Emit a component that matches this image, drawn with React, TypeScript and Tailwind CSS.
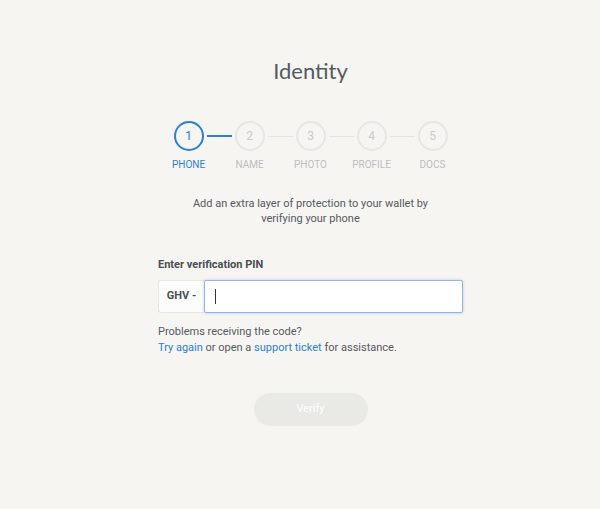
import React from "react";

const steps = ["PHONE", "NAME", "PHOTO", "PROFILE", "DOCS"];

export default function App() {
  return (
    <div className="w-[600px] h-[509px] bg-[#f6f5f2] flex justify-center pl-[21px]" style={{ fontFamily: "Roboto, 'Liberation Sans', sans-serif" }}>
      <div className="w-[305px] flex flex-col items-center">
        <h1 className="mt-[57px] text-[22px] leading-[28px] text-[#555a60]" style={{ fontFamily: "Lato, 'Liberation Sans', sans-serif" }}>Identity</h1>
        <div className="mt-[36px] flex items-start">
          {steps.map((s, i) => (
            <React.Fragment key={s}>
              {i > 0 && (
                <div className="w-[31px] h-[30px] flex items-center px-[3px]">
                  <div className={i === 1 ? "h-[2px] w-full bg-[#2d7fd3]" : "h-[1px] w-full bg-[#e3e3e1]"} />
                </div>
              )}
              <div className="w-[30px] flex flex-col items-center">
                <div className={i === 0 ? "w-[30px] h-[30px] rounded-full border-2 border-[#2d7fd3] flex items-center justify-center text-[12px] text-[#2d7fd3]" : "w-[30px] h-[30px] rounded-full border-2 border-[#e6e6e4] flex items-center justify-center text-[12px] text-[#c9c9c9]"}>
                  {i + 1}
                </div>
                <div className={i === 0 ? "mt-[8px] text-[10px] leading-[12px] whitespace-nowrap text-[#2d7fd3]" : "mt-[8px] text-[10px] leading-[12px] whitespace-nowrap text-[#bdbdbd]"}>{s}</div>
              </div>
            </React.Fragment>
          ))}
        </div>
        <p className="mt-[25px] text-[11px] leading-[15px] text-[#555a60] text-center w-[250px]">
          Add an extra layer of protection to your wallet by verifying your phone
        </p>
        <div className="w-full mt-[32px]">
          <div className="text-[11px] leading-[14px] font-bold text-[#4a4e54]">Enter verification PIN</div>
          <div className="mt-[8px] flex h-[33px]">
            <div className="w-[46px] bg-[#fcfcfb] border border-[#e6e6e3] border-r-0 rounded-l-[3px] flex items-center justify-center text-[11px] font-bold text-[#4a4e54]">GHV -</div>
            <div className="flex-1 bg-white border border-[#8fb6e2] rounded-[2px] shadow-[0_0_3px_rgba(45,127,211,0.35)] flex items-center pl-[10px]">
              <div className="w-[1px] h-[15px] bg-[#333]" />
            </div>
          </div>
          <div className="mt-[11px] text-[11px] leading-[16px] text-[#555a60]">
            <div>Problems receiving the code?</div>
            <div>
              <span className="text-[#2d7fd3]">Try again</span> or open a <span className="text-[#2d7fd3]">support ticket</span> for assistance.
            </div>
          </div>
        </div>
        <button className="mt-[37px] w-[114px] h-[33px] rounded-full bg-[#e9e9e6] text-white text-[11px]">Verify</button>
      </div>
    </div>
  );
}
